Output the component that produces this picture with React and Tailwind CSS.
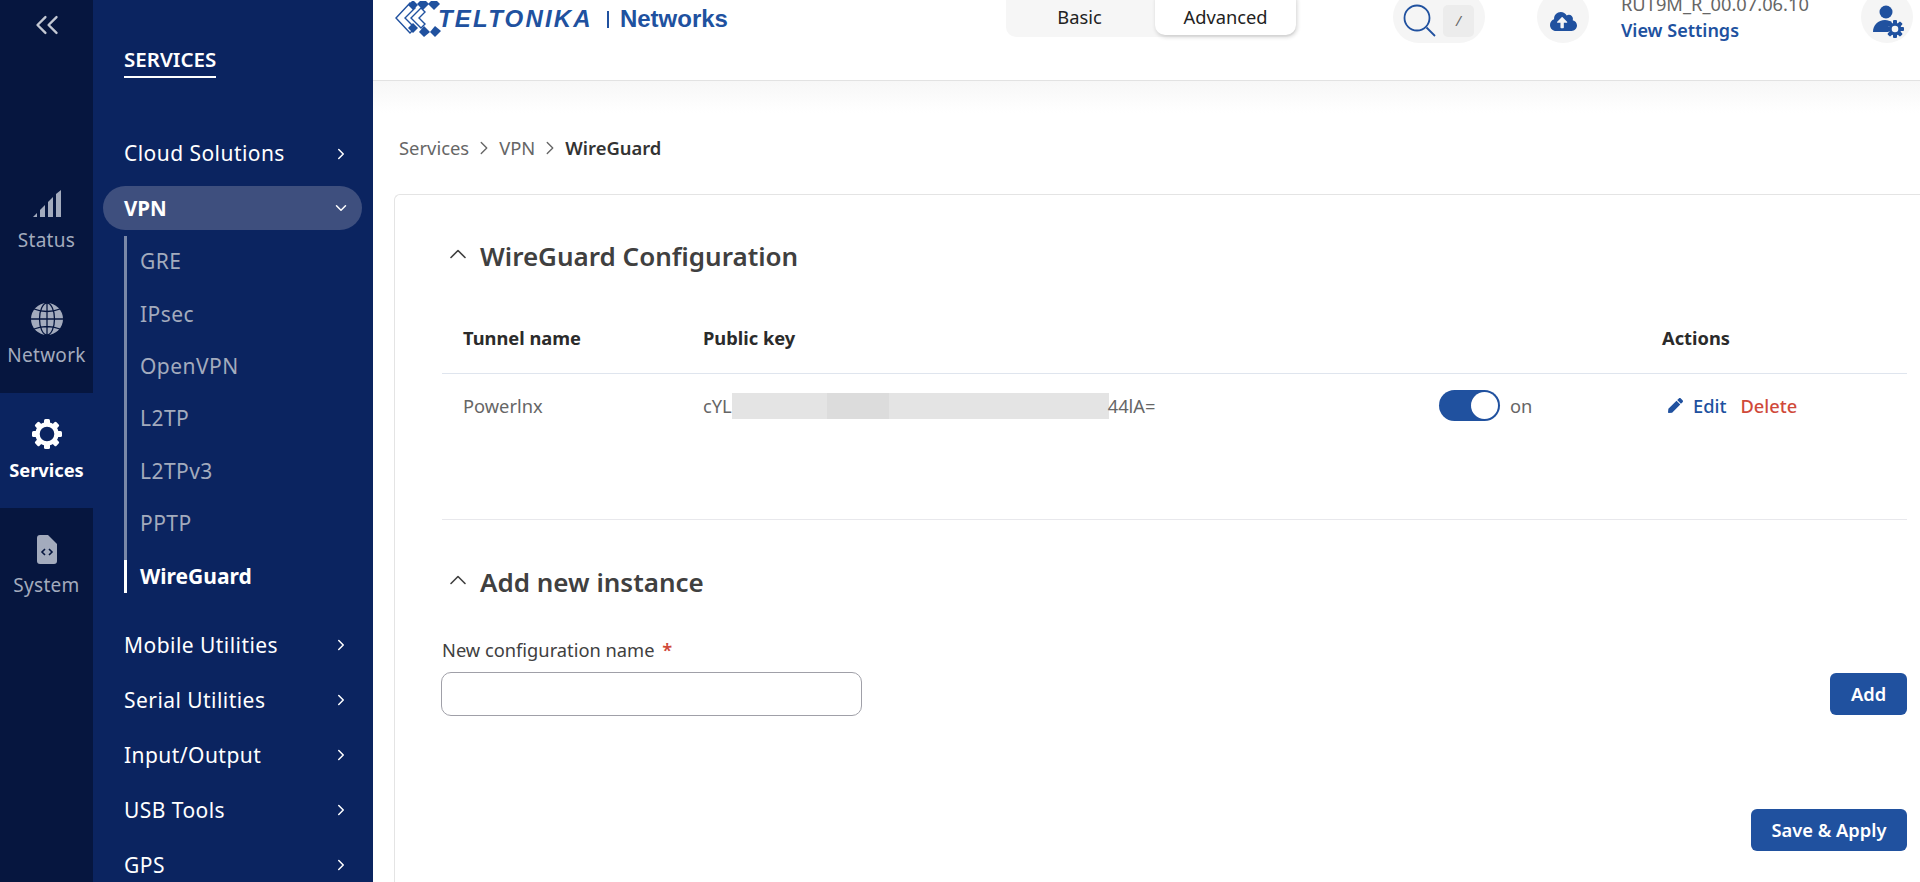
import React from 'react';
import { ChevronRight, ChevronDown, ChevronUp, ChevronsLeft } from 'lucide-react';
import { FaCloudUploadAlt, FaPen } from 'react-icons/fa';

const SUB_ITEMS = ['GRE', 'IPsec', 'OpenVPN', 'L2TP', 'L2TPv3', 'PPTP'];
const LOWER_ITEMS = ['Mobile Utilities', 'Serial Utilities', 'Input/Output', 'USB Tools', 'GPS'];
const TEETH = [0, 45, 90, 135, 180, 225, 270, 315];

function SignalIcon() {
  return (
    <svg width="28" height="28" viewBox="0 0 28 28" fill="currentColor">
      <path d="M0 27 L4 23 V27 Z" />
      <path d="M7 27 V20 L12 15 V27 Z" />
      <path d="M15 27 V12 L20 7 V27 Z" />
      <path d="M23 27 V4 L28 0 V27 Z" />
    </svg>
  );
}

function GlobeIcon() {
  return (
    <svg width="32" height="32" viewBox="0 0 32 32" fill="none">
      <circle cx="16" cy="16" r="16" fill="currentColor" />
      <g stroke="#06163f" strokeWidth="1.3">
        <ellipse cx="16" cy="16" rx="7.5" ry="16" />
        <path d="M16 0 V32 M0 16 H32 M3 6 Q16 11 29 6 M3 26 Q16 21 29 26" />
      </g>
    </svg>
  );
}

function GearIcon() {
  return (
    <svg width="30" height="30" viewBox="0 0 30 30" fill="none">
      {TEETH.map((deg) => (
        <rect key={deg} x="12" y="0" width="6" height="6" rx="1.5" fill="currentColor" transform={`rotate(${deg} 15 15)`} />
      ))}
      <circle cx="15" cy="15" r="9.5" stroke="currentColor" strokeWidth="4.4" />
    </svg>
  );
}

function FileCodeIcon() {
  return (
    <svg width="20" height="29" viewBox="0 0 20 29" fill="none">
      <path d="M3 0 H11 L20 9 V26 A3 3 0 0 1 17 29 H3 A3 3 0 0 1 0 26 V3 A3 3 0 0 1 3 0 Z" fill="currentColor" />
      <path d="M8 14 L5 17 L8 20 M12 14 L15 17 L12 20" stroke="#06163f" strokeWidth="1.6" />
    </svg>
  );
}

function UserGearIcon() {
  return (
    <svg width="32" height="33" viewBox="0 0 32 33" fill="#20519f">
      <circle cx="13" cy="7" r="6.5" />
      <path d="M0 27 C0 20 5 15 12 15 C15 15 17 16 19 17 C16 20 14 24 16 27 Z" />
      <g transform="translate(13 15)">
        {TEETH.map((deg) => (
          <rect key={deg} x="7" y="0" width="4" height="4" rx="1" transform={`rotate(${deg} 9 9)`} />
        ))}
        <circle cx="9" cy="9" r="4.8" fill="none" stroke="#20519f" strokeWidth="3" />
      </g>
    </svg>
  );
}

function LogoMark() {
  return (
    <svg width="48" height="36" viewBox="0 0 48 36" fill="none" className="shrink-0">
      <path d="M16 2 L2 17 L16 32 L21 27 L11 17 L21 7 Z" stroke="#20519f" strokeWidth="1.4" />
      <path d="M27 7 L17 17 L27 27 L31 23 L25 17 L31 11 Z" stroke="#20519f" strokeWidth="1.4" />
      <g fill="#20519f">
        <path d="M19 -1 L24 4 L19 9 L14 4 Z" />
        <path d="M29 -3 L35 3 L29 9 L23 3 Z" />
        <path d="M40 -3 L46 3 L40 9 L34 3 Z" />
        <path d="M19 22 L24 27 L19 32 L14 27 Z" />
        <path d="M30 25 L36 31 L30 36 L25 31 Z" />
        <path d="M41 25 L47 30 L41 36 L36 31 Z" />
      </g>
    </svg>
  );
}

function RailItem({ icon, label, active }) {
  return (
    <div
      className={`flex h-[115px] flex-col items-center pt-[25px] ${
        active ? 'bg-[#0b2460] text-[18.3px] font-bold text-white' : 'text-[19px] tracking-[0.3px] text-[#a3abbd]'
      }`}
    >
      <div className="flex h-[32px] items-center justify-center">{icon}</div>
      <span className="mt-[7px] leading-[26px]">{label}</span>
    </div>
  );
}

function Sidebar() {
  return (
    <aside className="flex h-full w-[373px] shrink-0">
      <div className="flex w-[93px] shrink-0 flex-col bg-[#06163f]">
        <div className="h-[163px] pt-[6px] text-[#c3c8d3]">
          <ChevronsLeft size={38} strokeWidth={1.5} className="mx-auto" />
        </div>
        <RailItem icon={<SignalIcon />} label="Status" />
        <RailItem icon={<GlobeIcon />} label="Network" />
        <RailItem icon={<GearIcon />} label="Services" active />
        <RailItem icon={<FileCodeIcon />} label="System" />
      </div>

      <div className="w-[280px] overflow-hidden bg-[#0b2460] text-white">
        <div className="pl-[31px] pt-[45px]">
          <span className="inline-block border-b-2 border-white pb-[3px] text-[20.5px] font-semibold leading-[28px]">SERVICES</span>
        </div>

        <div className="mt-[47px] flex h-[55px] items-center justify-between pl-[31px] pr-[23px] pt-[2px] text-[21px] tracking-[0.45px]">
          <span>Cloud Solutions</span>
          <ChevronRight size={18} strokeWidth={2} />
        </div>

        <div className="ml-[10px] mr-[11px] mt-[6px] flex h-[44px] items-center justify-between rounded-full bg-[#3e4f7e] pl-[21px] pr-[12px] text-[20.5px] font-bold">
          <span>VPN</span>
          <ChevronDown size={18} strokeWidth={2} />
        </div>

        <div className="ml-[31px] mt-[15px] border-l-[3px] border-[#7a88a8]">
          <div className="-mt-[9px]">
            {SUB_ITEMS.map((name) => (
              <div key={name} className="flex h-[52.3px] items-center pl-[13px] text-[21px] tracking-[0.45px] text-[#a3abbd]">
                {name}
              </div>
            ))}
          </div>
          <div className="-ml-[3px] mt-[10px] flex h-[33px] items-center border-l-[3px] border-white pl-[13px] text-[21px] font-bold">
            WireGuard
          </div>
        </div>

        <div className="mt-[25px]">
          {LOWER_ITEMS.map((name) => (
            <div key={name} className="flex h-[55px] items-center justify-between pl-[31px] pr-[23px] text-[21px] tracking-[0.45px]">
              <span>{name}</span>
              <ChevronRight size={18} strokeWidth={2} />
            </div>
          ))}
        </div>
      </div>
    </aside>
  );
}

function Header() {
  return (
    <header className="flex h-[81px] shrink-0 items-start overflow-hidden border-b border-[#e2e2e2] bg-white pl-[21px]">
      <div className="flex w-[612px] shrink-0 items-center pt-px" style={{ fontFamily: '"Liberation Sans", sans-serif' }}>
        <LogoMark />
        <span className="-ml-[4px] text-[24px] font-bold italic leading-[34px] tracking-[2.2px] text-[#20519f]">TELTONIKA</span>
        <span className="ml-[14px] h-[17px] w-[2px] bg-[#20519f]" />
        <span className="ml-[11px] text-[24px] font-bold leading-[34px] text-[#20519f]">Networks</span>
      </div>

      <div className="-mt-[10px] flex h-[47px] w-[290px] shrink-0 rounded-[10px] bg-[#f6f6f6] text-[18.3px] text-[#222]">
        <div className="flex w-[149px] items-center justify-center pr-[2px] pt-[7px]">Basic</div>
        <div className="flex h-[45px] w-[141px] items-center justify-center rounded-[10px] bg-white pt-[9px] shadow-[1px_2px_4px_rgba(0,0,0,0.18)]">Advanced</div>
      </div>

      <div className="ml-[97px] -mt-[9px] flex h-[52px] w-[92px] shrink-0 items-center gap-[7px] rounded-full bg-[#f5f5f5] pl-[10px]">
        <svg width="33" height="33" viewBox="0 0 33 33" fill="none" stroke="#20519f" strokeWidth="1.8" className="mt-[7px]">
          <circle cx="14" cy="14" r="12.5" />
          <path d="M23.5 23.5 L32 32" />
        </svg>
        <span className="mt-[7px] flex h-[32px] w-[31px] items-center justify-center rounded-[5px] bg-[#ececec] text-[14px] italic text-[#666]">/</span>
      </div>

      <div className="ml-[52px] -mt-[9px] flex h-[52px] w-[52px] shrink-0 items-center justify-center rounded-full bg-[#f5f5f5] pt-[9px] text-[#20519f]">
        <FaCloudUploadAlt size={27} />
      </div>

      <div className="ml-[32px] -mt-[9px] w-[240px] shrink-0 text-[18px] leading-[26px]">
        <div className="text-[18.3px] text-[#666]">RUT9M_R_00.07.06.10</div>
        <div className="font-semibold text-[#20519f]">View Settings</div>
      </div>

      <div className="-mt-[9px] flex h-[52px] w-[52px] shrink-0 items-center justify-center rounded-full bg-[#f5f5f5] pl-[3px] pt-[9px]">
        <UserGearIcon />
      </div>
    </header>
  );
}

function SectionTitle({ children }) {
  return (
    <div className="flex items-center gap-[7px] text-[#404040]">
      <ChevronUp size={28} strokeWidth={1.4} className="-mt-[5px] ml-[2px] shrink-0" />
      <h2 className="ml-px text-[26px] font-semibold leading-[36px]">{children}</h2>
    </div>
  );
}

function ConfigTable() {
  return (
    <div className="mt-[50px]">
      <div className="flex h-[50px] items-start border-b border-[#dfe5ee] text-[18.3px] font-bold text-[#2b2b2b]">
        <div className="w-[261px] pl-[21px]">Tunnel name</div>
        <div className="w-[959px]">Public key</div>
        <div>Actions</div>
      </div>
      <div className="flex h-[65px] items-center pb-[2px] text-[18.3px] text-[#666]">
        <div className="w-[261px] pl-[21px]">Powerlnx</div>
        <div className="flex w-[736px] items-center">
          <span>cYL</span>
          <span className="flex h-[26px] w-[377px]">
            <span className="w-[95px] bg-[#e4e4e4]" />
            <span className="w-[62px] bg-[#dcdcdc]" />
            <span className="w-[220px] bg-[#e4e4e4]" />
          </span>
          <span className="-ml-[1px]">44lA=</span>
        </div>
        <div className="flex w-[223px] items-center gap-[10px]">
          <span className="flex h-[31px] w-[61px] items-center justify-end rounded-full bg-[#20519f] pr-[2px]">
            <span className="h-[27px] w-[27px] rounded-full bg-white" />
          </span>
          <span>on</span>
        </div>
        <div className="flex items-center font-medium">
          <FaPen size={15} className="ml-[6px] text-[#20519f]" />
          <span className="ml-[10px] text-[#20519f]">Edit</span>
          <span className="ml-[14px] text-[#d0493a]">Delete</span>
        </div>
      </div>
    </div>
  );
}

function Btn({ children, className = '' }) {
  return (
    <button className={`flex h-[42px] items-center justify-center rounded-[6px] bg-[#20519f] text-[18.3px] font-semibold text-white ${className}`}>
      {children}
    </button>
  );
}

export default function App() {
  return (
    <div className="flex h-screen w-full overflow-hidden bg-white" style={{ fontFamily: '"Noto Sans", sans-serif' }}>
      <Sidebar />
      <main className="flex h-full min-w-0 flex-1 flex-col overflow-hidden">
        <Header />
        <div className="min-h-0 flex-1 bg-gradient-to-b from-[#f7f7f7] via-white via-[4%] to-white pl-[21px]">
          <div className="flex h-[113px] items-center pl-[5px] pt-[21px] text-[18.4px] text-[#666]">
            <span>Services</span>
            <ChevronRight size={22} strokeWidth={1.5} className="mx-[4px]" />
            <span>VPN</span>
            <ChevronRight size={22} strokeWidth={1.5} className="mx-[4px]" />
            <span className="font-semibold text-[#333]">WireGuard</span>
          </div>

          <section className="h-[700px] rounded-tl-[6px] border-l border-t border-[#e4e4e4] bg-white pl-[47px] pr-[13px] pt-[43px]">
            <SectionTitle>WireGuard Configuration</SectionTitle>
            <ConfigTable />

            <div className="mt-[80px] border-t border-[#e8e8ec] pt-[44px]">
              <SectionTitle>Add new instance</SectionTitle>
            </div>

            <div className="mt-[37px] text-[18.3px] leading-[26px] text-[#404040]">
              New configuration name <span className="ml-[3px] font-semibold text-[#d0493a]">*</span>
            </div>
            <div className="mt-[9px] flex items-center justify-between">
              <input className="-ml-px h-[44px] w-[421px] rounded-[10px] border border-[#a0a0a8] bg-white outline-none" />
              <Btn className="w-[77px]">Add</Btn>
            </div>
            <div className="mt-[93px] flex justify-end">
              <Btn className="w-[156px]">Save &amp; Apply</Btn>
            </div>
          </section>
        </div>
      </main>
    </div>
  );
}
